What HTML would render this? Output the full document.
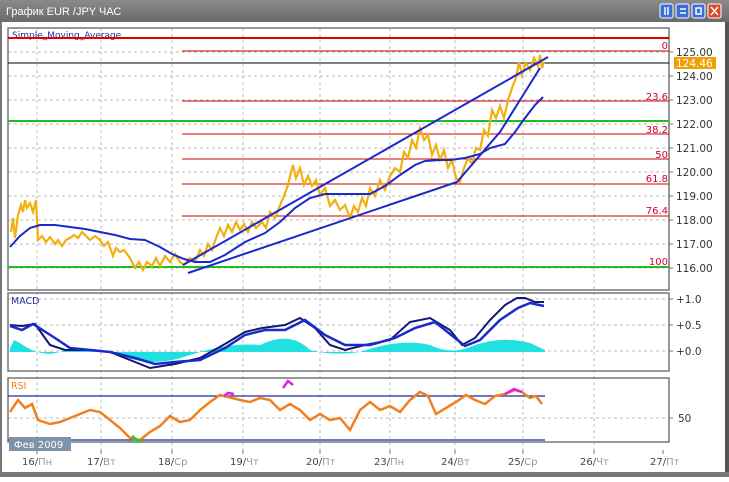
<!DOCTYPE html><html><head><meta charset="utf-8"><style>
body{margin:0;width:729px;height:477px;overflow:hidden;background:#fff;font-family:"Liberation Sans","DejaVu Sans",sans-serif}
</style></head><body>
<svg width="729" height="477" xmlns="http://www.w3.org/2000/svg" font-family="DejaVu Sans, Liberation Sans, sans-serif">
<defs><linearGradient id="tb" x1="0" y1="0" x2="0" y2="1"><stop offset="0" stop-color="#8a8a8a"/><stop offset="1" stop-color="#6a6a6a"/></linearGradient></defs>
<rect x="0" y="0" width="729" height="477" fill="#fff"/>
<rect x="0" y="0" width="729" height="22" fill="url(#tb)"/>
<text x="6" y="15" font-size="11" fill="#fff" font-family="Liberation Sans, sans-serif">График EUR /JPY  ЧАС</text>
<g stroke="#fff" stroke-width="1">
<rect x="660" y="4" width="13" height="14" rx="2" fill="#3a6fd8"/><rect x="676" y="4" width="13" height="14" rx="2" fill="#3a6fd8"/><rect x="692" y="4" width="13" height="14" rx="2" fill="#3a6fd8"/><rect x="708" y="4" width="13" height="14" rx="2" fill="#d84a2a"/>
</g>
<g stroke="#fff" stroke-width="1.5" fill="none"><path d="M665 7v8M668 7v8M680 9h6M680 13h6M696 8h5v6h-5z M711 7l7 8M718 7l-7 8"/></g>
<rect x="0" y="22" width="2" height="455" fill="#777"/><rect x="725" y="22" width="4" height="455" fill="#555"/><rect x="0" y="472" width="729" height="5" fill="#777"/>
<g stroke="#bbb" stroke-dasharray="3,3" stroke-width="1">
<path d="M37 28V450M101 28V450M172 28V450M243 28V450M320 28V450M390 28V450M455 28V450M523 28V450M594 28V450"/>
<path d="M8 52H669M8 76H669M8 100H669M8 124H669M8 148H669M8 172H669M8 196H669M8 220H669M8 244H669M8 268H669"/>
<path d="M8 299H669M8 325H669M8 351H669M8 418H669"/>
</g>
<g fill="none" stroke="#777" stroke-width="1.5">
<rect x="8" y="28" width="661" height="262"/><rect x="8" y="293" width="661" height="78"/><rect x="8" y="378" width="661" height="64"/>
</g>
<g stroke="#777"><path d="M669 52h4M669 76h4M669 100h4M669 124h4M669 148h4M669 172h4M669 196h4M669 220h4M669 244h4M669 268h4M669 299h4M669 325h4M669 351h4M669 418h4M37 450v4M101 450v4M172 450v4M243 450v4M320 450v4M390 450v4M455 450v4M523 450v4M594 450v4M663 450v4"/></g>
<text x="12" y="38" font-size="9" fill="#2030a0">Simple_Moving_Average</text>
<rect x="8" y="37" width="661" height="2" fill="#e00000"/>
<g stroke="#d00000" stroke-width="1"><path d="M182 51H669M182 101H669M182 134H669M182 159H669M182 184H669M182 216H669"/></g>
<path d="M8 63H669" stroke="#000" stroke-width="1"/>
<path d="M8 121H669M8 267H669" stroke="#22bb22" stroke-width="2"/>
<g font-size="10" fill="#d00030" text-anchor="end"><text x="668" y="49">0</text><text x="668" y="100">23.6</text><text x="668" y="133">38.2</text><text x="668" y="158">50</text><text x="668" y="182">61.8</text><text x="668" y="214">76.4</text><text x="668" y="265">100</text></g>
<g font-size="10.5" fill="#333"><text x="676" y="56">125.00</text><text x="676" y="80">124.00</text><text x="676" y="104">123.00</text><text x="676" y="128">122.00</text><text x="676" y="152">121.00</text><text x="676" y="176">120.00</text><text x="676" y="200">119.00</text><text x="676" y="224">118.00</text><text x="676" y="248">117.00</text><text x="676" y="272">116.00</text>
<text x="676" y="303">+1.0</text><text x="676" y="329">+0.5</text><text x="676" y="355">+0.0</text><text x="678" y="422">50</text></g>
<rect x="674" y="57" width="42" height="12" fill="#f0a000"/><text x="676" y="67" font-size="10.5" fill="#fff">124.46</text>
<!-- price -->
<polyline fill="none" stroke="#f2b010" stroke-width="2.2" points="11,232 13,218 15,238 18,215 21,205 23,212 25,200 27,208 30,203 33,212 36,200 38,240 42,236 46,242 50,237 55,244 58,240 62,246 66,240 70,238 74,235 78,238 82,232 86,236 90,240 95,236 100,240 104,246 108,242 113,256 116,248 120,252 124,250 130,258 135,268 139,262 143,270 147,262 152,266 156,258 160,266 165,256 170,262 175,254 180,262 184,265 190,258 195,262 200,250 204,256 208,244 212,250 216,238 220,228 224,236 228,225 232,232 236,222 240,230 244,224 248,232 252,222 256,228 262,222 266,228 270,212 275,218 280,205 284,196 288,185 291,172 293,165 296,178 300,168 304,185 308,176 312,186 316,180 320,195 325,188 330,206 335,200 340,210 345,205 350,218 354,206 358,212 362,198 366,206 370,188 375,196 380,180 385,190 390,176 395,168 400,172 404,152 408,158 412,140 416,148 420,128 424,140 428,135 432,155 436,145 440,160 444,150 448,168 452,160 456,178 460,182 464,168 468,158 472,164 476,148 480,150 484,130 488,136 492,110 496,118 500,106 504,118 508,100 512,88 516,78 519,62 522,75 526,63 530,70 534,58 538,66 540,55 542,68 544,62"/>
<!-- MA -->
<polyline fill="none" stroke="#1a2ac8" stroke-width="2" points="10,247 20,236 30,228 40,225 55,225 70,227 85,229 100,232 115,235 130,239 145,240 160,247 172,254 184,259 195,262 210,262 225,255 245,242 265,233 280,222 295,208 310,198 325,194 345,194 370,194 385,186 400,175 415,165 425,161 440,160 450,160 465,158 480,154 490,148 505,144 515,132 525,118 535,105 543,97"/>
<path d="M183 265L548 57M188 273L457 182L500 132L540 68" stroke="#1a2ac8" stroke-width="2" fill="none"/>
<!-- MACD -->
<text x="11" y="304" font-size="9.5" fill="#2030a0">MACD</text>
<path d="M10 348 L14 340 L20 343 Q40 358 60 352 Q80 345 110 352 Q150 370 190 355 Q230 342 260 345 Q290 330 310 350 Q330 356 360 352 Q400 338 430 345 Q450 355 470 347 Q500 335 530 343 L545 350 L545 352 L10 352Z" fill="#20e0e0"/>
<polyline fill="none" stroke="#101870" stroke-width="2" points="10,325 22,326 35,324 50,345 65,350 90,350 110,352 130,360 150,368 175,364 200,358 225,344 245,332 262,328 285,325 300,318 315,328 330,345 345,350 365,345 390,340 410,322 430,318 450,330 462,345 475,338 490,320 505,305 517,298 525,298 535,302 544,302"/>
<polyline fill="none" stroke="#1a2ac8" stroke-width="2.5" points="10,326 22,330 33,324 55,338 70,348 90,350 110,352 135,358 155,364 175,362 200,360 225,348 245,335 265,330 285,330 305,320 325,335 345,345 370,345 395,338 415,328 435,322 455,338 465,346 480,340 500,320 518,308 530,303 544,306"/>
<!-- RSI -->
<text x="11" y="389" font-size="9.5" fill="#f08020">RSI</text>
<path d="M8 396H545M8 440H545" stroke="#1a2aa0" stroke-width="1.2"/>
<polyline fill="none" stroke="#f08020" stroke-width="2.5" points="10,412 18,400 25,408 32,404 38,420 50,424 60,422 70,418 80,414 90,410 100,412 110,420 120,428 130,438 140,440 150,432 160,426 170,416 180,422 190,420 200,410 210,402 220,395 228,397 240,400 250,402 260,398 270,400 280,410 290,404 300,410 310,420 320,414 330,420 340,418 350,430 360,410 370,402 380,410 390,406 400,412 410,400 420,392 428,396 436,414 446,408 456,402 466,395 475,400 485,404 495,396 505,394 515,390 522,392 530,398 536,396 542,404"/>
<polyline fill="none" stroke="#e020e0" stroke-width="2.5" points="224,396 228,393 234,394"/>
<polyline fill="none" stroke="#e020e0" stroke-width="2.5" points="283,388 288,381 293,385"/>
<polyline fill="none" stroke="#e020e0" stroke-width="2.5" points="505,394 514,389 522,392"/>
<polyline fill="none" stroke="#22cc22" stroke-width="2.5" points="132,436 138,441 142,441"/>
<rect x="9" y="437" width="62" height="14" fill="#7f93a8"/><text x="14" y="448" font-size="10" fill="#fff">Фев 2009</text>
<g font-size="10" fill="#444"><text x="22" y="465">16/<tspan fill="#999">Пн</tspan></text><text x="87" y="465">17/<tspan fill="#999">Вт</tspan></text><text x="158" y="465">18/<tspan fill="#999">Ср</tspan></text><text x="230" y="465">19/<tspan fill="#999">Чт</tspan></text><text x="306" y="465">20/<tspan fill="#999">Пт</tspan></text><text x="374" y="465">23/<tspan fill="#999">Пн</tspan></text><text x="441" y="465">24/<tspan fill="#999">Вт</tspan></text><text x="508" y="465">25/<tspan fill="#999">Ср</tspan></text><text x="580" y="465">26/<tspan fill="#999">Чт</tspan></text><text x="650" y="465">27/<tspan fill="#999">Пт</tspan></text></g>
</svg>
</body></html>
